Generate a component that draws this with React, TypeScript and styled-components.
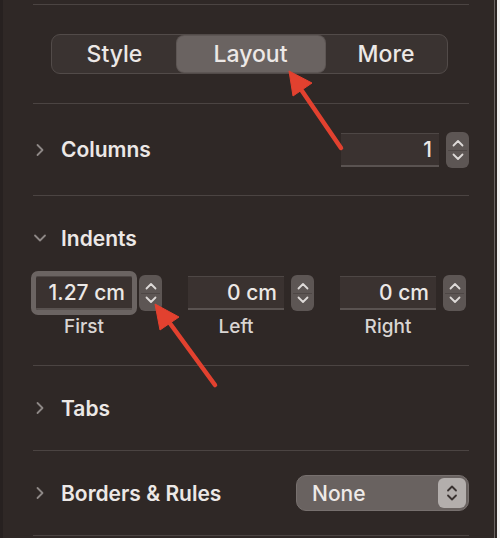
import React from "react";
import styled, { createGlobalStyle } from "styled-components";

const GlobalStyle = createGlobalStyle`
  html, body {
    margin: 0;
    padding: 0;
    background: #2f2826;
  }
  body {
    font-family: Inter, "Liberation Sans", sans-serif;
    -webkit-font-smoothing: antialiased;
  }
`;

const Panel = styled.div`
  position: relative;
  width: 500px;
  height: 538px;
  box-sizing: border-box;
  background: #2f2826;
  padding: 4px 31px 0 33px;
  border-left: 3px solid #272120;
  overflow: hidden;

  &::after {
    content: "";
    position: absolute;
    top: 0;
    right: 0;
    width: 6px;
    height: 100%;
    background: linear-gradient(
      to right,
      #6a6462 0 1px,
      #2a2422 1px 3px,
      #f2f2f2 3px 6px
    );
  }
`;

const Separator = styled.div`
  height: 1px;
  background: #4b4442;
  margin-left: -3px;
`;

const Section = styled.div<{ $h: number; $top?: number }>`
  height: ${(p) => p.$h}px;
  box-sizing: border-box;
  display: flex;
  flex-direction: column;
  justify-content: ${(p) => (p.$top ? "flex-start" : "center")};
  padding-top: ${(p) => p.$top ?? 0}px;
`;

const Segmented = styled.div`
  align-self: center;
  margin-left: -7px;
  display: grid;
  grid-template-columns: 124px 148px 123px;
  height: 40px;
  width: 397px;
  box-sizing: border-box;
  padding: 1px;
  border-radius: 9px;
  background: #3a3331;
  border: 1px solid #524b49;
`;

const Segment = styled.div<{ $active?: boolean }>`
  display: flex;
  align-items: center;
  justify-content: center;
  border-radius: 7px;
  font-size: 23px;
  font-weight: 500;
  color: #ece8e6;
  background: ${(p) => (p.$active ? "#6a6361" : "transparent")};
  box-shadow: ${(p) => (p.$active ? "0 0 0 1px #5d5654" : "none")};
`;

const Row = styled.div`
  display: flex;
  align-items: center;
  justify-content: space-between;
`;

const Heading = styled.div`
  display: flex;
  align-items: center;
  height: 24px;
  font-size: 21px;
  font-weight: 600;
  color: #ece8e6;
  margin-left: -3px;
`;

const Chevron = styled.svg`
  width: 14px;
  height: 14px;
  margin-right: 14px;
  flex: none;
`;

const Control = styled.div`
  display: flex;
  align-items: center;
  gap: 7px;
`;

const Field = styled.div<{ $w: number; $focus?: boolean }>`
  width: ${(p) => p.$w}px;
  height: 34px;
  box-sizing: border-box;
  display: flex;
  align-items: center;
  justify-content: flex-end;
  padding-right: 7px;
  background: #3a3230;
  border-top: 1px solid #4e4745;
  border-bottom: 2px solid #5a5351;
  font-size: 21px;
  font-weight: 500;
  color: #ece8e6;
  outline: ${(p) => (p.$focus ? "5px solid #6b6462" : "none")};
  border-radius: ${(p) => (p.$focus ? "2px" : "0")};
`;

const Stepper = styled.div`
  width: 23px;
  height: 36px;
  border-radius: 6px;
  background: #5d5654;
  display: flex;
  flex-direction: column;
  align-items: center;
  justify-content: space-around;
  box-sizing: border-box;
  padding: 4px 0;
  position: relative;

  &::before {
    content: "";
    position: absolute;
    left: 2px;
    right: 2px;
    top: 50%;
    height: 1px;
    background: #4e4745;
  }
`;

const IndentGrid = styled.div`
  display: grid;
  grid-template-columns: repeat(3, 126px);
  column-gap: 26px;
  margin-top: 25px;
`;

const IndentCell = styled.div`
  display: flex;
  flex-direction: column;
  align-items: flex-start;
`;

const Label = styled.div`
  width: 96px;
  text-align: center;
  margin-top: 4px;
  font-size: 19px;
  font-weight: 500;
  color: #d9d5d3;
`;

const Popup = styled.div`
  width: 173px;
  height: 36px;
  box-sizing: border-box;
  border-radius: 10px;
  background: #696260;
  border: 1px solid #77706e;
  display: flex;
  align-items: center;
  justify-content: space-between;
  padding: 0 2px 0 15px;
  font-size: 21px;
  font-weight: 500;
  color: #eeeae8;
`;

const PopupKnob = styled.div`
  width: 28px;
  height: 30px;
  border-radius: 6px;
  background: #b3aeac;
  display: flex;
  align-items: center;
  justify-content: center;
`;

const Overlay = styled.svg`
  position: absolute;
  left: 0;
  top: 0;
  pointer-events: none;
`;

const Arrow = ({ dir }: { dir: "up" | "down" }) => (
  <svg width="12" height="8" viewBox="0 0 12 8">
    <path
      d={dir === "up" ? "M1.5 6.5 L6 2 L10.5 6.5" : "M1.5 1.5 L6 6 L10.5 1.5"}
      fill="none"
      stroke="#dedad8"
      strokeWidth="1.8"
      strokeLinecap="round"
      strokeLinejoin="round"
    />
  </svg>
);

const Spin = () => (
  <Stepper>
    <Arrow dir="up" />
    <Arrow dir="down" />
  </Stepper>
);

const Disclosure = ({ open }: { open?: boolean }) => (
  <Chevron viewBox="0 0 14 14">
    <path
      d={open ? "M2 4.5 L7 9.5 L12 4.5" : "M4.5 2 L9.5 7 L4.5 12"}
      fill="none"
      stroke="#8e8886"
      strokeWidth="1.8"
      strokeLinecap="round"
      strokeLinejoin="round"
    />
  </Chevron>
);

const indents = [
  { label: "First", value: "1.27 cm", focus: true },
  { label: "Left", value: "0 cm" },
  { label: "Right", value: "0 cm" },
];

export default function App() {
  return (
    <>
      <GlobalStyle />
      <Panel>
        <Separator />
        <Section $h={98}>
          <Segmented>
            <Segment>Style</Segment>
            <Segment $active>Layout</Segment>
            <Segment>More</Segment>
          </Segmented>
        </Section>
        <Separator />
        <Section $h={91}>
          <Row>
            <Heading>
              <Disclosure />
              Columns
            </Heading>
            <Control>
              <Field $w={98}>1</Field>
              <Spin />
            </Control>
          </Row>
        </Section>
        <Separator />
        <Section $h={169} $top={30}>
          <Heading>
            <Disclosure open />
            Indents
          </Heading>
          <IndentGrid>
            {indents.map((it) => (
              <IndentCell key={it.label}>
                <Control>
                  <Field $w={96} $focus={it.focus}>
                    {it.value}
                  </Field>
                  <Spin />
                </Control>
                <Label>{it.label}</Label>
              </IndentCell>
            ))}
          </IndentGrid>
        </Section>
        <Separator />
        <Section $h={84}>
          <Heading>
            <Disclosure />
            Tabs
          </Heading>
        </Section>
        <Separator />
        <Section $h={84}>
          <Row>
            <Heading>
              <Disclosure />
              Borders &amp; Rules
            </Heading>
            <Popup>
              None
              <PopupKnob>
                <svg width="12" height="18" viewBox="0 0 12 18">
                  <path
                    d="M2 6.5 L6 2.5 L10 6.5 M2 11.5 L6 15.5 L10 11.5"
                    fill="none"
                    stroke="#3a3331"
                    strokeWidth="1.8"
                    strokeLinecap="round"
                    strokeLinejoin="round"
                  />
                </svg>
              </PopupKnob>
            </Popup>
          </Row>
        </Section>
        <Separator />

        <Overlay width="500" height="538" viewBox="0 0 500 538">
          <g fill="#e2412f" stroke="#e2412f">
            <line x1="338" y1="148" x2="297" y2="88" strokeWidth="4.5" strokeLinecap="round" />
            <polygon points="286,71 309,83 290,96" strokeWidth="1" strokeLinejoin="round" />
            <line x1="212" y1="385" x2="166" y2="322" strokeWidth="4.5" strokeLinecap="round" />
            <polygon points="152,304 176,317 157,330" strokeWidth="1" strokeLinejoin="round" />
          </g>
        </Overlay>
      </Panel>
    </>
  );
}
